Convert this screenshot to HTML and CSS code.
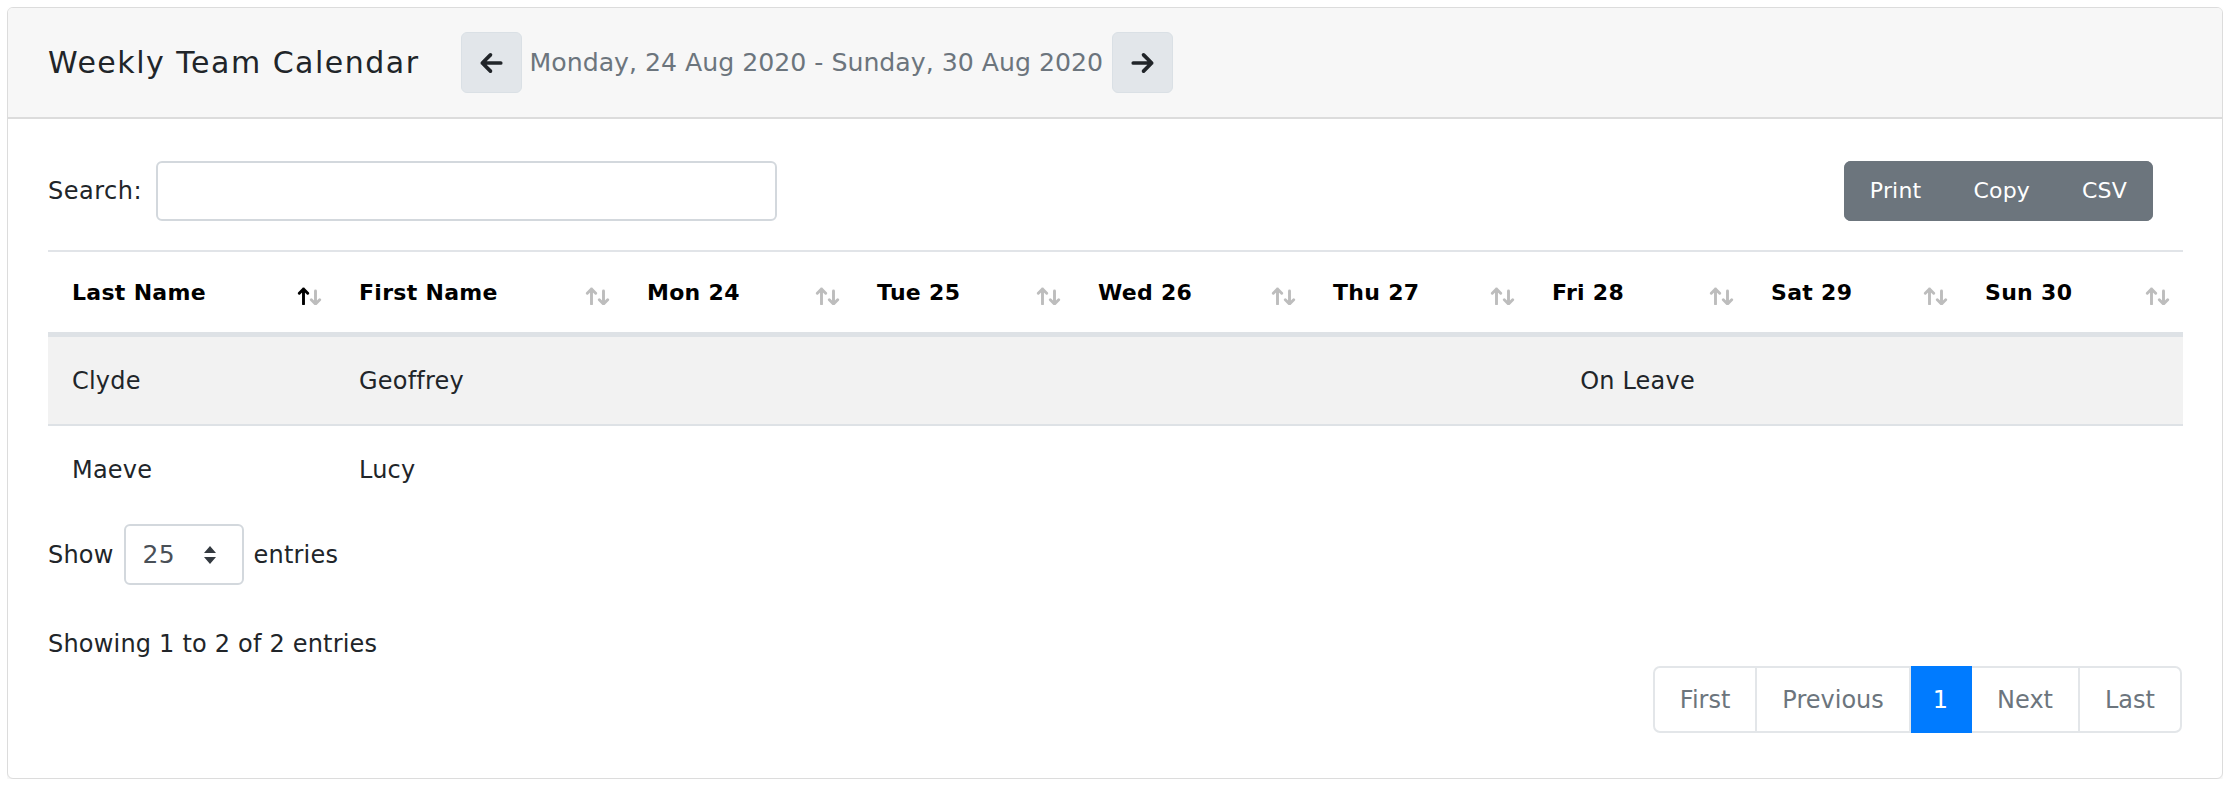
FILE: index.html
```html
<!DOCTYPE html>
<html lang="en">
<head>
<meta charset="utf-8">
<title>Weekly Team Calendar</title>
<link rel="stylesheet" href="styles.css">
</head>
<body>
<div class="card">
  <div class="card-header">
    <h5 class="title">Weekly Team Calendar</h5>
    <button class="nav-btn" type="button" aria-label="Previous week">
      <svg width="26" height="26" viewBox="0 0 24 24"><path d="M21 12H4M11.5 4.5 4 12l7.5 7.5" fill="none" stroke="#212529" stroke-width="3.4" stroke-linecap="round" stroke-linejoin="round"/></svg>
    </button>
    <span class="range">Monday, 24 Aug 2020 - Sunday, 30 Aug 2020</span>
    <button class="nav-btn" type="button" aria-label="Next week">
      <svg width="26" height="26" viewBox="0 0 24 24"><path d="M3 12h17M12.5 4.5 20 12l-7.5 7.5" fill="none" stroke="#212529" stroke-width="3.4" stroke-linecap="round" stroke-linejoin="round"/></svg>
    </button>
  </div>
  <div class="card-body">
    <div class="toolbar">
      <label class="search">Search:<input class="search-input" type="search"></label>
      <div class="btn-group">
        <button class="btn-sec" type="button">Print</button>
        <button class="btn-sec" type="button">Copy</button>
        <button class="btn-sec" type="button">CSV</button>
      </div>
    </div>
    <table class="cal">
      <colgroup>
        <col class="w1"><col class="w2"><col class="w3"><col class="w4"><col class="w5"><col class="w6"><col class="w7"><col class="w8"><col class="w9">
      </colgroup>
      <thead>
        <tr>
          <th class="sorted">Last Name<span class="sort"><svg width="25" height="18" viewBox="0 0 24 18"><path class="up" d="M6 17V2M1.8 6.2 6 2l4.2 4.2"/><path class="down" d="M18 4v13M13.8 12.8 18 17l4.2-4.2"/></svg></span></th>
          <th>First Name<span class="sort"><svg width="25" height="18" viewBox="0 0 24 18"><path class="up" d="M6 17V2M1.8 6.2 6 2l4.2 4.2"/><path class="down" d="M18 4v13M13.8 12.8 18 17l4.2-4.2"/></svg></span></th>
          <th>Mon 24<span class="sort"><svg width="25" height="18" viewBox="0 0 24 18"><path class="up" d="M6 17V2M1.8 6.2 6 2l4.2 4.2"/><path class="down" d="M18 4v13M13.8 12.8 18 17l4.2-4.2"/></svg></span></th>
          <th>Tue 25<span class="sort"><svg width="25" height="18" viewBox="0 0 24 18"><path class="up" d="M6 17V2M1.8 6.2 6 2l4.2 4.2"/><path class="down" d="M18 4v13M13.8 12.8 18 17l4.2-4.2"/></svg></span></th>
          <th>Wed 26<span class="sort"><svg width="25" height="18" viewBox="0 0 24 18"><path class="up" d="M6 17V2M1.8 6.2 6 2l4.2 4.2"/><path class="down" d="M18 4v13M13.8 12.8 18 17l4.2-4.2"/></svg></span></th>
          <th>Thu 27<span class="sort"><svg width="25" height="18" viewBox="0 0 24 18"><path class="up" d="M6 17V2M1.8 6.2 6 2l4.2 4.2"/><path class="down" d="M18 4v13M13.8 12.8 18 17l4.2-4.2"/></svg></span></th>
          <th>Fri 28<span class="sort"><svg width="25" height="18" viewBox="0 0 24 18"><path class="up" d="M6 17V2M1.8 6.2 6 2l4.2 4.2"/><path class="down" d="M18 4v13M13.8 12.8 18 17l4.2-4.2"/></svg></span></th>
          <th>Sat 29<span class="sort"><svg width="25" height="18" viewBox="0 0 24 18"><path class="up" d="M6 17V2M1.8 6.2 6 2l4.2 4.2"/><path class="down" d="M18 4v13M13.8 12.8 18 17l4.2-4.2"/></svg></span></th>
          <th>Sun 30<span class="sort"><svg width="25" height="18" viewBox="0 0 24 18"><path class="up" d="M6 17V2M1.8 6.2 6 2l4.2 4.2"/><path class="down" d="M18 4v13M13.8 12.8 18 17l4.2-4.2"/></svg></span></th>
        </tr>
      </thead>
      <tbody>
        <tr class="odd">
          <td>Clyde</td><td>Geoffrey</td><td></td><td></td><td></td><td></td><td class="center">On Leave</td><td></td><td></td>
        </tr>
        <tr class="even">
          <td>Maeve</td><td>Lucy</td><td></td><td></td><td></td><td></td><td></td><td></td><td></td>
        </tr>
      </tbody>
    </table>
    <div class="length">
      <span>Show</span>
      <div class="select">
        <span>25</span>
        <svg width="16" height="20" viewBox="0 0 16 20"><path d="M2 8 8 1l6 7zM2 12l6 7 6-7z" fill="#343a40"/></svg>
      </div>
      <span>entries</span>
    </div>
    <div class="info">Showing 1 to 2 of 2 entries</div>
    <div class="paging">
      <ul class="pagination">
        <li class="page first"><span>First</span></li>
        <li class="page"><span>Previous</span></li>
        <li class="page active"><span>1</span></li>
        <li class="page"><span>Next</span></li>
        <li class="page last"><span>Last</span></li>
      </ul>
    </div>
  </div>
</div>
</body>
</html>
```
FILE: styles.css
```css
* { box-sizing: border-box; }

body {
  margin: 7px;
  font-family: "DejaVu Sans", "Noto Sans", sans-serif;
  font-size: 24px;
  letter-spacing: 0.2px;
  color: #212529;
  background: #ffffff;
}

.card {
  border: 1px solid #dcdcdc;
  border-radius: 6px;
  background: #ffffff;
  box-shadow: 0 2px 4px rgba(0, 0, 0, 0.07);
  overflow: hidden;
}

.card-header {
  display: flex;
  align-items: center;
  background: #f7f7f7;
  border-bottom: 2px solid #dcdcdc;
  padding: 24px 40px;
}

.title {
  margin: 0 41px 0 0;
  font-size: 30px;
  font-weight: 400;
  letter-spacing: 1.5px;
  line-height: 36px;
  color: #212529;
}

.nav-btn {
  width: 61px;
  height: 61px;
  padding: 0;
  display: flex;
  align-items: center;
  justify-content: center;
  background: #e2e6ea;
  border: 1px solid #dae0e5;
  border-radius: 6px;
}

.range {
  margin: 0 9px 0 8px;
  font-size: 25.2px;
  letter-spacing: 0;
  color: #6c757d;
  line-height: 36px;
}

.card-body {
  padding: 41px 40px 45px 40px;
}

.toolbar {
  display: flex;
  justify-content: space-between;
  align-items: center;
  height: 61px;
}

.search {
  display: flex;
  align-items: center;
  letter-spacing: 0.5px;
}

.search-input {
  margin-left: 14px;
  width: 621px;
  height: 60px;
  border: 2px solid #d3d8dd;
  border-radius: 6px;
  background: #ffffff;
}

.btn-group {
  display: flex;
  height: 60px;
  margin-right: 29px;
  border-radius: 7px;
  overflow: hidden;
  background: #6c757d;
}

.btn-sec {
  border: 0;
  background: #6c757d;
  color: #ffffff;
  font-family: inherit;
  font-size: 22px;
  letter-spacing: 0.2px;
  padding: 0 26px;
  height: 60px;
}

.cal {
  margin-top: 29px;
  width: 100%;
  table-layout: fixed;
  border-collapse: separate;
  border-spacing: 0;
}

.w1 { width: 287px; }
.w2 { width: 288px; }
.w3 { width: 230px; }
.w4 { width: 221px; }
.w5 { width: 235px; }
.w6 { width: 219px; }
.w7 { width: 219px; }
.w8 { width: 214px; }
.w9 { width: 222px; }

.cal th {
  position: relative;
  height: 87px;
  padding: 0 40px 0 24px;
  text-align: left;
  font-size: 22px;
  font-weight: 700;
  letter-spacing: 0.3px;
  color: #000000;
  border-top: 2px solid #e1e4e8;
  border-bottom: 5px solid #dee2e6;
  white-space: nowrap;
  vertical-align: middle;
}

.sort {
  position: absolute;
  right: 13px;
  top: 35px;
  line-height: 0;
}

.sort path {
  fill: none;
  stroke: #bdbdbd;
  stroke-width: 2.9;
  stroke-linecap: round;
  stroke-linejoin: round;
}

.sorted .sort .up { stroke: #000000; }

.cal td {
  height: 87px;
  padding: 0 24px;
  vertical-align: middle;
  white-space: nowrap;
}

.cal .odd td { background: #f2f2f2; }

.cal .even td {
  height: 89px;
  border-top: 2px solid #dee2e6;
}

.cal td.center { text-align: center; }

.length {
  margin-top: 11px;
  display: flex;
  align-items: center;
  gap: 10px;
}

.select {
  width: 120px;
  height: 61px;
  display: flex;
  align-items: center;
  justify-content: space-between;
  padding: 0 24px 0 17px;
  border: 2px solid #d3d8dd;
  border-radius: 6px;
  color: #495057;
  font-size: 25px;
}

.info {
  margin-top: 41px;
  line-height: 36px;
}

.paging {
  margin-top: 4px;
  display: flex;
  justify-content: flex-end;
}

.pagination {
  display: flex;
  margin: 0;
  padding: 0;
  list-style: none;
  letter-spacing: 0;
}

.page {
  height: 67px;
  display: flex;
  align-items: center;
  padding: 0 25px;
  color: #6c757d;
  border: 2px solid #e3e6e9;
  border-left-width: 0;
  background: #ffffff;
}

.page.first {
  border-left-width: 2px;
  border-radius: 7px 0 0 7px;
}

.page.last {
  border-radius: 0 7px 7px 0;
}

.page.active {
  background: #007bff;
  border-color: #007bff;
  color: #ffffff;
  padding: 0 22px;
}
```
